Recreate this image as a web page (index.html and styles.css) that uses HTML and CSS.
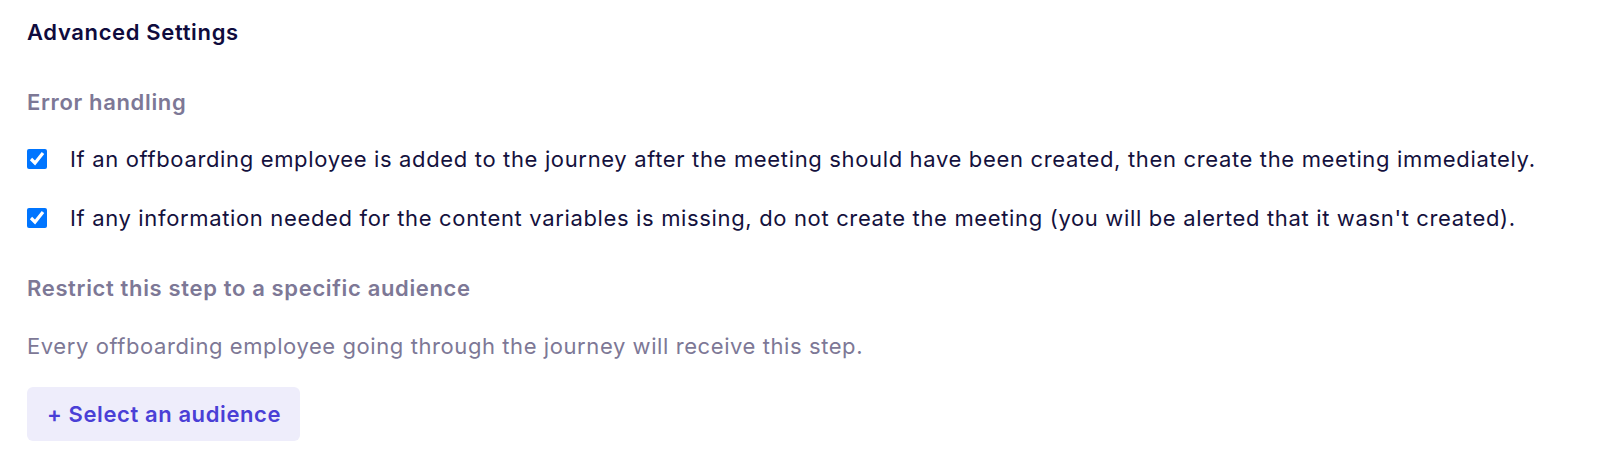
FILE: index.html
```html
<!DOCTYPE html>
<html>
<head>
<meta charset="utf-8">
<link rel="stylesheet" href="styles.css">
</head>
<body>
<section class="settings">
  <h2 class="title">Advanced Settings</h2>
  <h3 class="subhead subhead-first">Error handling</h3>
  <label class="check-row">
    <input type="checkbox" class="check" checked>
    <span>If an offboarding employee is added to the journey after the meeting should have been created, then create the meeting immediately.</span>
  </label>
  <label class="check-row check-row-second">
    <input type="checkbox" class="check" checked>
    <span>If any information needed for the content variables is missing, do not create the meeting (you will be alerted that it wasn't created).</span>
  </label>
  <h3 class="subhead subhead-second">Restrict this step to a specific audience</h3>
  <p class="note">Every offboarding employee going through the journey will receive this step.</p>
  <button class="audience-btn">+ Select an audience</button>
</section>
</body>
</html>
```
FILE: styles.css
```css
html, body {
  margin: 0;
  padding: 0;
  background: #ffffff;
}
body {
  font-family: Inter, "Noto Sans", sans-serif;
  font-size: 22px;
  line-height: 28px;
  letter-spacing: 0.65px;
  color: #14113d;
  font-optical-sizing: none;
}
.settings {
  padding: 18px 0 0 27px;
  display: flex;
  flex-direction: column;
  align-items: flex-start;
}
.title {
  margin: 0;
  font-size: 22px;
  line-height: 28px;
  font-weight: 600;
  color: #0f0b3d;
}
.subhead {
  margin: 0;
  font-size: 22px;
  line-height: 28px;
  font-weight: 600;
  color: #7d7896;
}
.subhead-first {
  margin-top: 42px;
}
.subhead-second {
  margin-top: 42px;
}
.check-row {
  display: flex;
  align-items: center;
  gap: 23px;
  margin-top: 29px;
  color: #14113d;
}
.check-row-second {
  margin-top: 31px;
}
.check {
  margin: 0;
  width: 20px;
  height: 20px;
  flex: none;
}
.note {
  margin: 30px 0 0;
  letter-spacing: 0.58px;
  color: #7d7896;
}
.audience-btn {
  margin-top: 27px;
  font-family: inherit;
  font-size: 22px;
  line-height: 28px;
  font-weight: 600;
  letter-spacing: 0.6px;
  color: #4a3fd6;
  background: #eeedfb;
  border: none;
  border-radius: 6px;
  padding: 13px 19px 13px 20px;
  font-optical-sizing: none;
}
```
